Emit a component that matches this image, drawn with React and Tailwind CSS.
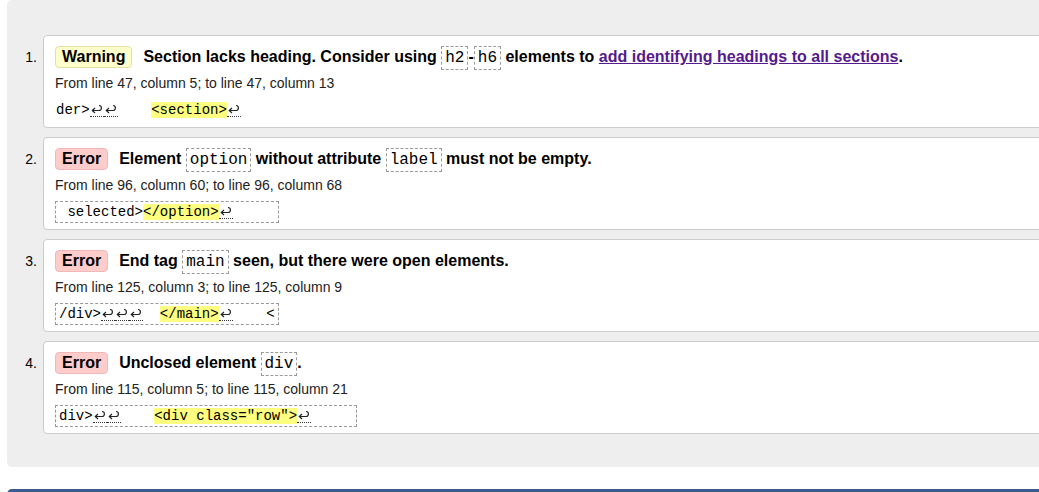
import React from "react";

const mono = "font-['Liberation_Mono','Courier_New',monospace]";

function Lf() {
  return (
    <span className="inline-block h-[14px] w-[14px] border-b border-dotted border-[#333] align-[-3px]">
      <svg width="11" height="10" viewBox="0 0 11 10" className="mt-[1px] ml-[1px]" fill="none" stroke="#222" strokeWidth="1.2">
        <path d="M8 1.5 C10 1.5 10.4 2.5 10.4 4 C10.4 5.5 9.5 6.5 8 6.5 L1.5 6.5" />
        <path d="M4 4 L1.3 6.5 L4 9" />
      </svg>
    </span>
  );
}

function Hl({ children }) {
  return <span className="bg-[#ffff80]">{children}</span>;
}

function Code({ children }) {
  return (
    <code
      className={`${mono} inline-block border border-dashed border-[#999] px-[3px] text-[16px] font-normal leading-[22px]`}
    >
      {children}
    </code>
  );
}

function Badge({ type }) {
  const warn = type === "Warning";
  return (
    <span
      className={`mr-[11px] inline-block rounded-[4px] border px-[6px] leading-[20px] ${
        warn ? "border-[#e2e0a6] bg-[#ffffcc]" : "border-[#f0b8b8] bg-[#ffcccc]"
      }`}
    >
      {type}
    </span>
  );
}

function Extract({ boxed, children }) {
  return (
    <div className="mt-[5px] h-[22px]">
      <code
        className={`${mono} inline-block whitespace-pre text-[14px] leading-[20px] ${
          boxed ? "border border-dashed border-[#999] px-[3px]" : "border border-transparent px-0"
        }`}
      >
        {children}
      </code>
    </div>
  );
}

function Item({ n, type, msg, from, extract, boxed = true }) {
  return (
    <li className="flex">
      <span className="w-[30px] shrink-0 pt-[11px] text-right text-[14px] leading-[22px]">{n}.</span>
      <div className="ml-[6px] flex-1 rounded-[4px] border border-[#cccccc] bg-white pt-[10px] pb-[8px] pl-[11px]">
        <div className="h-[22px] whitespace-nowrap text-[16px] font-bold leading-[22px]">
          <Badge type={type} />
          {msg}
        </div>
        <div className="mt-[6px] text-[14px] leading-[18px] text-[#222]">{from}</div>
        <Extract boxed={boxed}>{extract}</Extract>
      </div>
    </li>
  );
}

export default function App() {
  return (
    <div className="h-[492px] w-full overflow-hidden bg-white pl-[7px] font-['Liberation_Sans',Arial,sans-serif] text-black">
      <div className="w-[1060px] rounded-[5px] bg-[#eeeeee] pt-[35px] pb-[33px]">
        <ol className="flex flex-col gap-[9px]">
          <Item
            n={1}
            type="Warning"
            boxed={false}
            msg={
              <>
                Section lacks heading. Consider using <Code>h2</Code>-<Code>h6</Code> elements to{" "}
                <a href="#" className="text-[#551a8b] underline">
                  add identifying headings to all sections
                </a>
                .
              </>
            }
            from="From line 47, column 5; to line 47, column 13"
            extract={
              <>
                der&gt;
                <Lf />
                <Lf />
                {"    "}
                <Hl>&lt;section&gt;</Hl>
                <Lf />
              </>
            }
          />
          <Item
            n={2}
            type="Error"
            msg={
              <>
                Element <Code>option</Code> without attribute <Code>label</Code> must not be empty.
              </>
            }
            from="From line 96, column 60; to line 96, column 68"
            extract={
              <>
                {" "}selected&gt;
                <Hl>&lt;/option&gt;</Hl>
                <Lf />
                {"     "}
              </>
            }
          />
          <Item
            n={3}
            type="Error"
            msg={
              <>
                End tag <Code>main</Code> seen, but there were open elements.
              </>
            }
            from="From line 125, column 3; to line 125, column 9"
            extract={
              <>
                /div&gt;
                <Lf />
                <Lf />
                <Lf />
                {"  "}
                <Hl>&lt;/main&gt;</Hl>
                <Lf />
                {"    "}&lt;
              </>
            }
          />
          <Item
            n={4}
            type="Error"
            msg={
              <>
                Unclosed element <Code>div</Code>.
              </>
            }
            from="From line 115, column 5; to line 115, column 21"
            extract={
              <>
                div&gt;
                <Lf />
                <Lf />
                {"    "}
                <Hl>&lt;div class="row"&gt;</Hl>
                <Lf />
                {"     "}
              </>
            }
          />
        </ol>
      </div>
      <div className="mt-[22px] h-[10px] w-[1060px] rounded-t-[5px] bg-[#3b5b8f]" />
    </div>
  );
}
